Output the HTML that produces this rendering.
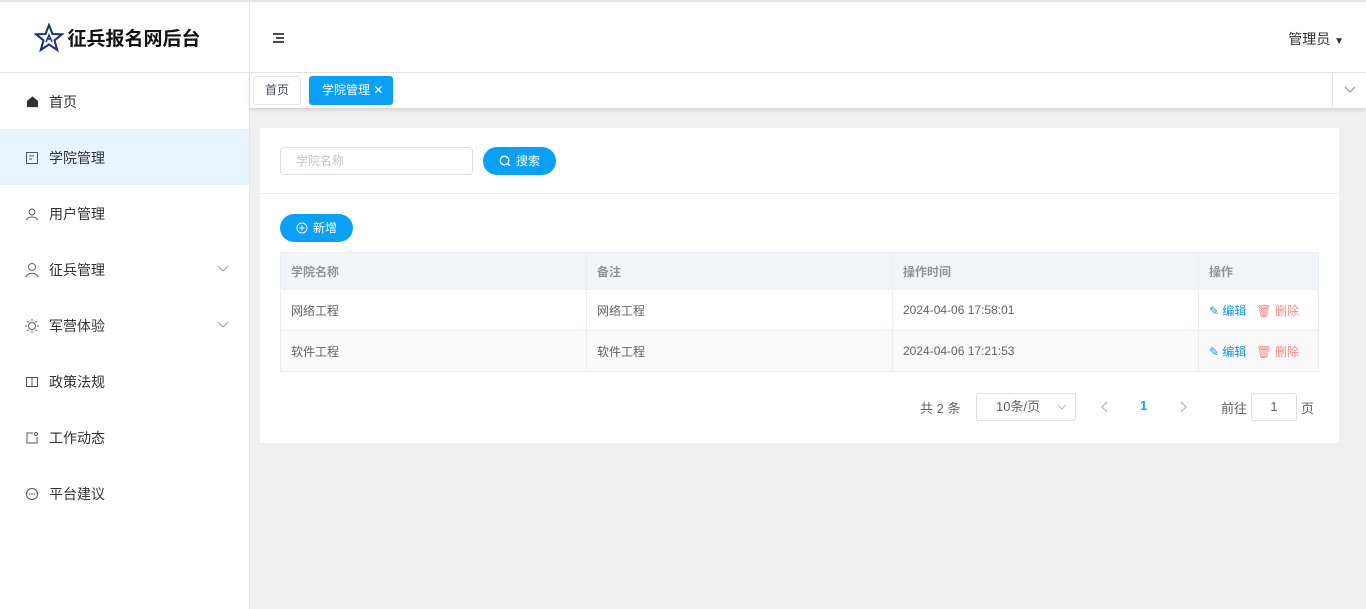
<!DOCTYPE html>
<html><head><meta charset="utf-8"><style>
*{box-sizing:border-box;margin:0;padding:0}
body{width:1366px;height:609px;overflow:hidden;font-family:"Liberation Sans","Noto Sans CJK SC",sans-serif;background:#f0f0f0;position:relative;font-size:13px;color:#333}
.top{position:absolute;left:0;top:0;width:1366px;height:2px;background:#e6e6e6}
.side{position:absolute;left:0;top:2px;width:250px;height:607px;background:#fff;border-right:1px solid #e6e6e6}
.logo{height:71px;border-bottom:1px solid #e6e6e6;display:flex;align-items:center;justify-content:center;font-size:19px;font-weight:bold;color:#111;gap:3px;padding-right:14px;padding-top:1px}
.mi{height:56px;display:flex;align-items:center;padding-left:24px;font-size:14px;color:#303133;position:relative;padding-top:1px}
.ic{width:16px;display:inline-flex;justify-content:center;margin-right:9px}
.mi.act{background:#e8f4ff}
.arr{position:absolute;left:217px;top:24px}
.hdr{position:absolute;left:250px;top:2px;width:1116px;height:71px;background:#fff;border-bottom:1px solid #e6e6e6}
.tabs{position:absolute;left:250px;top:73px;width:1116px;height:35px;background:#fff;box-shadow:0 2px 4px rgba(0,0,0,.12)}
.tab{position:absolute;top:3px;height:29px;border:1px solid #e4e7ed;border-radius:3px;font-size:12px;line-height:27px;padding:0 11px;color:#495060;white-space:nowrap}
.card{position:absolute;left:260px;top:128px;width:1079px;height:315px;background:#fff}
.inp{position:absolute;left:20px;top:19px;width:193px;height:28px;border:1px solid #dcdfe6;border-radius:4px;color:#c0c4cc;font-size:12px;line-height:26px;padding-left:15px}
.btn{position:absolute;height:28px;border-radius:14px;background:#0aa0f6;color:#fff;font-size:12px;line-height:28px;display:flex;align-items:center;justify-content:center;gap:5px}
table{position:absolute;left:20px;top:124px;width:1039px;border-collapse:collapse;font-size:12px}
td,th{border:1px solid #ebeef5;padding-left:10px;text-align:left;color:#606266;font-weight:normal}
th{height:37px;background:#f3f6f9;color:#909399;font-weight:bold}
td{height:41px}
tr.z td{background:#fafafa}
.ed{color:#1296db}.dl{color:#f78989;margin-left:10px}
.pg{position:absolute;top:270px;color:#606266}
</style></head><body>
<div class="top"></div>
<div class="side">
<div class="logo"><svg width="30" height="30" viewBox="0 0 30 30"><path d="M15 2 L18.5 11 L28 11.3 L20.5 17.3 L23.2 27 L15 21.4 L6.8 27 L9.5 17.3 L2 11.3 L11.5 11Z" fill="none" stroke="#1b2e7e" stroke-width="2"/><path d="M12 19 L15 12 L18 19 M13 16h4" stroke="#1b2e7e" stroke-width="1.5" fill="none"/></svg>征兵报名网后台</div>
<div class="mi"><span class="ic"><svg width="13" height="13" viewBox="0 0 14 14"><path d="M1 6.5 L7 1.5 L13 6.5 V13 H1Z" fill="#303133"/></svg></span>首页</div>
<div class="mi act"><span class="ic"><svg width="14" height="14" viewBox="0 0 14 14"><rect x="1.5" y="1.5" width="11" height="11" fill="none" stroke="#555"/><path d="M4 5h5M4 8h3" stroke="#555"/></svg></span>学院管理</div>
<div class="mi"><span class="ic"><svg width="14" height="14" viewBox="0 0 14 14"><circle cx="7" cy="5" r="3" fill="none" stroke="#555"/><path d="M1.5 13c1-4 10-4 11 0" fill="none" stroke="#555"/></svg></span>用户管理</div>
<div class="mi"><span class="ic"><svg width="16" height="16" viewBox="0 0 16 16"><circle cx="8" cy="5" r="3.5" fill="none" stroke="#666"/><path d="M2 15c1-5 11-5 12 0" fill="none" stroke="#666"/></svg></span>征兵管理<svg class="arr" width="12" height="8" viewBox="0 0 12 8"><path d="M1 1l5 5 5-5" fill="none" stroke="#999"/></svg></div>
<div class="mi"><span class="ic"><svg width="16" height="16" viewBox="0 0 16 16"><circle cx="8" cy="8" r="3.5" fill="none" stroke="#666"/><path d="M8 1v2M8 13v2M1 8h2M13 8h2M3 3l1.5 1.5M11.5 11.5L13 13M3 13l1.5-1.5M11.5 4.5L13 3" stroke="#666"/></svg></span>军营体验<svg class="arr" width="12" height="8" viewBox="0 0 12 8"><path d="M1 1l5 5 5-5" fill="none" stroke="#999"/></svg></div>
<div class="mi"><span class="ic"><svg width="14" height="14" viewBox="0 0 14 14"><rect x="1.5" y="2.5" width="11" height="9" fill="none" stroke="#555"/><path d="M7 2.5v9" stroke="#555"/></svg></span>政策法规</div>
<div class="mi"><span class="ic"><svg width="14" height="14" viewBox="0 0 14 14"><path d="M8 2H2v10h10V6" fill="none" stroke="#555"/><circle cx="11" cy="3" r="1.5" fill="none" stroke="#555"/></svg></span>工作动态</div>
<div class="mi"><span class="ic"><svg width="14" height="14" viewBox="0 0 14 14"><circle cx="7" cy="7" r="5.5" fill="none" stroke="#555"/><circle cx="4.5" cy="7" r=".8" fill="#555"/><circle cx="7" cy="7" r=".8" fill="#555"/><circle cx="9.5" cy="7" r=".8" fill="#555"/></svg></span>平台建议</div>
</div>
<div class="hdr"><svg style="position:absolute;left:23px;top:31px" width="11" height="10" viewBox="0 0 11 10"><path d="M0 1h11M3 5h8M0 9h11" stroke="#111" stroke-width="1.5"/></svg>
<div style="position:absolute;right:22px;top:27px;font-size:14px;color:#333">管理员 <span style="font-size:10px">▼</span></div></div>
<div class="tabs">
<div class="tab" style="left:3px">首页</div>
<div class="tab" style="left:59px;width:84px;background:#0aa0f6;border-color:#0aa0f6;color:#fff;padding:0 0 0 12px">学院管理 ✕</div>
<div style="position:absolute;right:0;top:0;width:34px;height:35px;border-left:1px solid #e6e6e6"><svg style="position:absolute;left:11px;top:13px" width="12" height="8" viewBox="0 0 12 8"><path d="M1 1l5 5 5-5" fill="none" stroke="#888"/></svg></div>
</div>
<div class="card">
<div class="inp">学院名称</div>
<div class="btn" style="left:223px;top:19px;width:73px"><svg width="12" height="12" viewBox="0 0 12 12"><circle cx="5.5" cy="5.5" r="4.3" fill="none" stroke="#fff" stroke-width="1.3"/><path d="M8.5 8.5l2.5 2.5" stroke="#fff" stroke-width="1.3"/></svg>搜索</div>
<div style="position:absolute;left:0;top:65px;width:1079px;height:1px;background:#ebeef5"></div>
<div class="btn" style="left:20px;top:86px;width:73px"><svg width="12" height="12" viewBox="0 0 12 12"><circle cx="6" cy="6" r="5" fill="none" stroke="#fff"/><path d="M6 3.5v5M3.5 6h5" stroke="#fff"/></svg>新增</div>
<table>
<tr><th style="width:306px">学院名称</th><th style="width:306px">备注</th><th style="width:306px">操作时间</th><th>操作</th></tr>
<tr><td>网络工程</td><td>网络工程</td><td>2024-04-06 17:58:01</td><td><span class="ed">✎ 编辑</span><span class="dl">🗑 删除</span></td></tr>
<tr class="z"><td>软件工程</td><td>软件工程</td><td>2024-04-06 17:21:53</td><td><span class="ed">✎ 编辑</span><span class="dl">🗑 删除</span></td></tr>
</table>
<div class="pg" style="left:660px">共 2 条</div>
<div style="position:absolute;left:716px;top:265px;width:100px;height:28px;border:1px solid #dcdfe6;border-radius:3px;font-size:13px;line-height:26px;padding-left:19px;color:#606266">10条/页<svg style="position:absolute;right:8px;top:10px" width="10" height="7" viewBox="0 0 10 7"><path d="M1 1l4 4 4-4" fill="none" stroke="#bbb"/></svg></div>
<svg style="position:absolute;left:841px;top:273px" width="8" height="12" viewBox="0 0 8 12"><path d="M6 1L1 6l5 5" fill="none" stroke="#bbb" stroke-width="1.3"/></svg>
<div class="pg" style="left:880px;color:#0aa0f6;font-weight:bold">1</div>
<svg style="position:absolute;left:919px;top:273px" width="8" height="12" viewBox="0 0 8 12"><path d="M2 1l5 5-5 5" fill="none" stroke="#bbb" stroke-width="1.3"/></svg>
<div class="pg" style="left:961px">前往</div>
<div style="position:absolute;left:991px;top:265px;width:46px;height:28px;border:1px solid #dcdfe6;border-radius:3px;text-align:center;line-height:26px;color:#606266">1</div>
<div class="pg" style="left:1041px">页</div>
</div>
</body></html>
